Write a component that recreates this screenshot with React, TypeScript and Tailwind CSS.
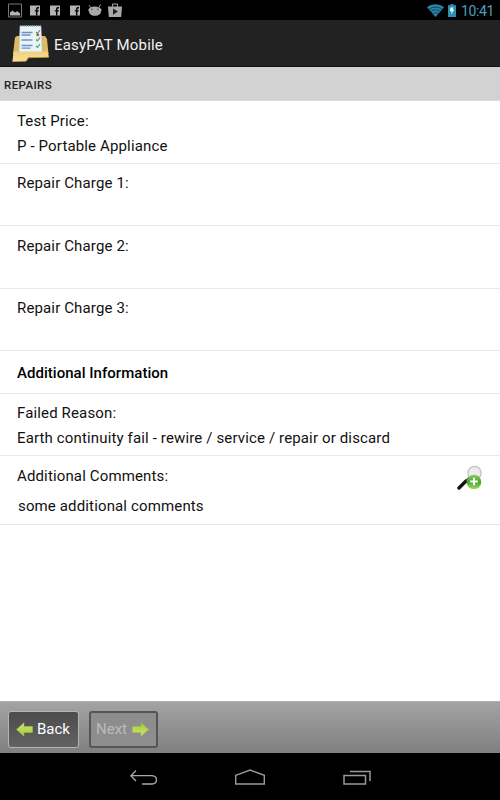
import React from 'react';

interface FieldRowProps {
  label: string;
  value?: string;
  className: string;
}

function FacebookIcon() {
  return (
    <svg width="10" height="11" viewBox="0 0 10 11">
      <path fill="#b4b4b4" d="M0 .5h10v10H0z" />
      <path fill="none" stroke="#000" strokeWidth="1.4" d="M9 2.700h-.9c-1 0-1.400.5-1.400 1.400v6.400M4.800 5.900h4" />
    </svg>
  );
}

function StatusBar() {
  return (
    <div className="flex h-5 items-center justify-between bg-black pr-[5px] pl-2">
      <div className="flex items-center">
        <svg width="14" height="15" viewBox="0 0 14 15">
          <path fill="none" stroke="#777" d="M.5 1h13v13H.5z" />
          <path fill="#b4b4b4" d="M2 12.5V9.4l2.6-2 2.2 2.1 2.4-1.2 2.8 1.9v2.3z" />
        </svg>
        <div className="ml-2 flex gap-[10px]">
          <FacebookIcon />
          <FacebookIcon />
          <FacebookIcon />
        </div>
        <svg className="ml-2" width="14" height="14" viewBox="0 0 14 14">
          <path fill="none" stroke="#aaa" strokeWidth=".9" d="M1 2.200 3 5M12.500 1.500 11 4.500" />
          <path fill="#aaa" d="M0 7.300C.8 4.800 3.300 3.500 6.700 3.500s6 1.300 7.200 3.600l-.8.6c.2 3-2.500 5-6.200 5-3.500 0-6-1.900-6-4.800z" />
          <path fill="#444" d="M3.300 5.800h1.200V7H3.300zM9.300 5.800h1.200V7H9.300z" />
        </svg>
        <svg className="ml-[6px]" width="14" height="15" viewBox="0 0 14 15">
          <path fill="none" stroke="#aaa" d="M4.500 3.800V1h5v2.800" />
          <path fill="#aaa" d="M0 3.500h14l-.8 10.500H.8z" />
          <path fill="#222" d="M5 5.500v6.300l5-3.200z" />
        </svg>
      </div>
      <div className="flex items-center">
        <svg width="17" height="13" viewBox="0 0 17 13">
          <path fill="#2787a7" d="M0 3.300C4.800-.7 12.200-.7 17 3.300L8.500 13z" />
          <path fill="none" stroke="#082530" strokeWidth=".7" d="M1.800 5.400c4-3 9.400-3 13.400 0M3.600 7.500c3-2.100 6.800-2.100 9.800 0M5.600 9.700c1.800-1.200 4-1.200 5.800 0" />
        </svg>
        <svg className="ml-[4px]" width="8" height="13" viewBox="0 0 8 13">
          <path fill="#2a91b2" d="M0 1.300h2.500V0h3v1.300H8V13H0z" />
          <path fill="#e8f6fa" d="M2.500 3.500h3L4.800 5.700h1.500L3 10.500l.7-3.300H1.800z" />
        </svg>
        <span className="mt-[2px] ml-[5px] w-[34px] text-[14px] leading-5 tracking-[-0.35px] whitespace-nowrap text-[#4aa0bc]">10:41</span>
      </div>
    </div>
  );
}

function AppLogo() {
  return (
    <svg width="37" height="39" viewBox="0 0 37 39">
      <defs>
        <linearGradient id="folder" x1="0" y1="0" x2="0" y2="1">
          <stop offset="0" stopColor="#f1cf7e" />
          <stop offset="1" stopColor="#f8df9b" />
        </linearGradient>
      </defs>
      <path fill="#e0b963" d="M3 13.500 5 12h28l2 3 1.500 15H1z" />
      <path fill="#e9f4f8" stroke="#b6cbd4" strokeWidth=".5" d="M8 2h21l1.200 27H7z" />
      <path stroke="#77909b" strokeWidth="1.500" strokeDasharray="1 1" d="M8 1.700h21" />
      <g fill="none" stroke="#6c91c4" strokeWidth="1.300">
        <path d="M9.500 8.500h11M9.500 11h9M9.500 16h11M9.500 21.500h11M9.500 24.200h9" />
      </g>
      <g fill="none" stroke="#43a665" strokeWidth="1.200">
        <path d="m24 8 1.500 1.300L28 6M24 15.500l1.500 1.300 2.500-3.300M24 22l1.500 1.300L28 20" />
      </g>
      <path fill="none" stroke="#cf3b3b" strokeWidth="1.200" d="m24.500 10 2.500 2m0-2-2.500 2" />
      <path fill="url(#folder)" d="M1.500 27.500h34.500l.8 5.500-20.300.5-2.500 3.500L.5 37.500z" />
      <path fill="none" stroke="#d5a34a" strokeWidth=".8" d="m36.800 33.300-20.300.4-2.500 3.500-13.500.4" />
    </svg>
  );
}

function TitleBar() {
  return (
    <div className="flex h-[47px] items-center border-b border-[#111] bg-[#222] pl-3">
      <AppLogo />
      <h1 className="mt-[3px] ml-[5px] text-[15px] leading-5 tracking-[0.17px] text-[#f1f1f1]">EasyPAT Mobile</h1>
    </div>
  );
}

function FieldRow({ label, value, className }: FieldRowProps) {
  return (
    <div className={`border-b border-[#e9e9e9] pl-[17px] ${className}`}>
      <p className="leading-[25px]">{label}</p>
      {value && <p className="leading-[25px]">{value}</p>}
    </div>
  );
}

function MagnifierIcon() {
  return (
    <svg className="mt-px" width="25" height="26" viewBox="0 0 25 26">
      <defs>
        <linearGradient id="plus" x1="0" y1="0" x2="0" y2="1">
          <stop offset="0" stopColor="#8ccc68" />
          <stop offset="0.5" stopColor="#48a52b" />
          <stop offset="1" stopColor="#a3dc62" />
        </linearGradient>
      </defs>
      <path stroke="#111" strokeWidth="3.400" strokeLinecap="round" d="m2 23 7-7" />
      <path stroke="#333" strokeWidth="2" d="m8.500 16.500 4-4" />
      <circle cx="17.500" cy="8" r="6.600" fill="#ececec" stroke="#c2c2c2" strokeWidth="1.300" />
      <circle cx="17" cy="17" r="7.300" fill="url(#plus)" />
      <path stroke="#fff" strokeWidth="2" d="M13.200 16.500h7.600M17 12.700v7.600" />
    </svg>
  );
}

function ArrowIcon({ className = '' }: { className?: string }) {
  return (
    <svg className={className} width="17" height="15" viewBox="0 0 17 15">
      <defs>
        <linearGradient id="arrow" x1="0" y1="0" x2="0" y2="1">
          <stop offset="0" stopColor="#d1e676" />
          <stop offset="1" stopColor="#9fca35" />
        </linearGradient>
      </defs>
      <path fill="url(#arrow)" stroke="#a2c250" strokeWidth=".5" d="M.5 7.500 8 .8v3.700h8.500v6H8v3.700z" />
    </svg>
  );
}

function Footer() {
  return (
    <div className="flex h-[52px] items-start border-t border-[#b0b0b0] bg-linear-to-b from-[#a3a3a3] to-[#808080] pt-[9px] pl-2">
      <button className="flex h-[37px] w-[71px] items-center rounded-[3px] border border-[#b5b5b5] bg-linear-to-b from-[#4c4c4c] to-[#626262] pl-[7px] text-white">
        <ArrowIcon />
        <span className="ml-1">Back</span>
      </button>
      <button className="ml-[10px] flex h-[37px] w-[69px] items-center rounded-[3px] border-2 border-[#555] bg-[#8d8d8d] pl-[5px] text-[#bcbcbc]">
        <span>Next</span>
        <ArrowIcon className="ml-[5px] rotate-180" />
      </button>
    </div>
  );
}

function NavigationBar() {
  return (
    <div className="flex h-[47px] items-start bg-black pt-[15px] pl-[130px]">
      <svg width="28" height="18" viewBox="0 0 28 18" fill="none" stroke="#aaa" strokeWidth="1.300">
        <path d="M6 2.500.9 7.700 6 13M1 7.700h20c3.700 0 5.500 1.500 5.500 4s-1.800 4.300-5.500 4.300h-9" />
      </svg>
      <svg className="ml-[76px]" width="32" height="18" viewBox="0 0 32 18" fill="none" stroke="#999" strokeWidth="1.400">
        <path d="M1.700 7.300 16 2l14.300 5.300V16H1.700z" />
      </svg>
      <svg className="ml-[76px]" width="30" height="18" viewBox="0 0 30 18" fill="none" stroke="#999" strokeWidth="1.500">
        <path d="M2 7.500h21.500V16H2zM8 3.500h20V13" />
      </svg>
    </div>
  );
}

export default function App() {
  return (
    <div className="flex h-[800px] w-[500px] flex-col overflow-hidden bg-white font-['Roboto',sans-serif] text-[15px] text-[#111]">
      <StatusBar />
      <TitleBar />
      <h2 className="h-[34px] border-b border-[#dadada] bg-[#d2d2d2] pl-1 text-[11.5px] leading-[36px] font-medium tracking-[0.4px] text-[#222]">
        REPAIRS
      </h2>
      <main className="flex-1 tracking-[0.14px]">
        <FieldRow label="Test Price:" value="P - Portable Appliance" className="h-[63px] pt-[8px]" />
        <FieldRow label="Repair Charge 1:" className="h-[62px] pt-[7px]" />
        <FieldRow label="Repair Charge 2:" className="h-[63px] pt-[8px]" />
        <FieldRow label="Repair Charge 3:" className="h-[62px] pt-[7px]" />
        <h3 className="h-[43px] border-b border-[#e9e9e9] pl-[17px] leading-[45px] font-medium tracking-[0.03px] text-black">
          Additional Information
        </h3>
        <FieldRow
          label="Failed Reason:"
          value="Earth continuity fail - rewire / service / repair or discard"
          className="h-[62px] pt-[7px]"
        />
        <div className="flex h-[69px] justify-between border-b border-[#e6e6e6] pt-[8px] pr-[18px] pl-[17px]">
          <div>
            <p className="leading-[25px]">Additional Comments:</p>
            <p className="mt-[5px] ml-px leading-[25px]">some additional comments</p>
          </div>
          <MagnifierIcon />
        </div>
      </main>
      <Footer />
      <NavigationBar />
    </div>
  );
}
